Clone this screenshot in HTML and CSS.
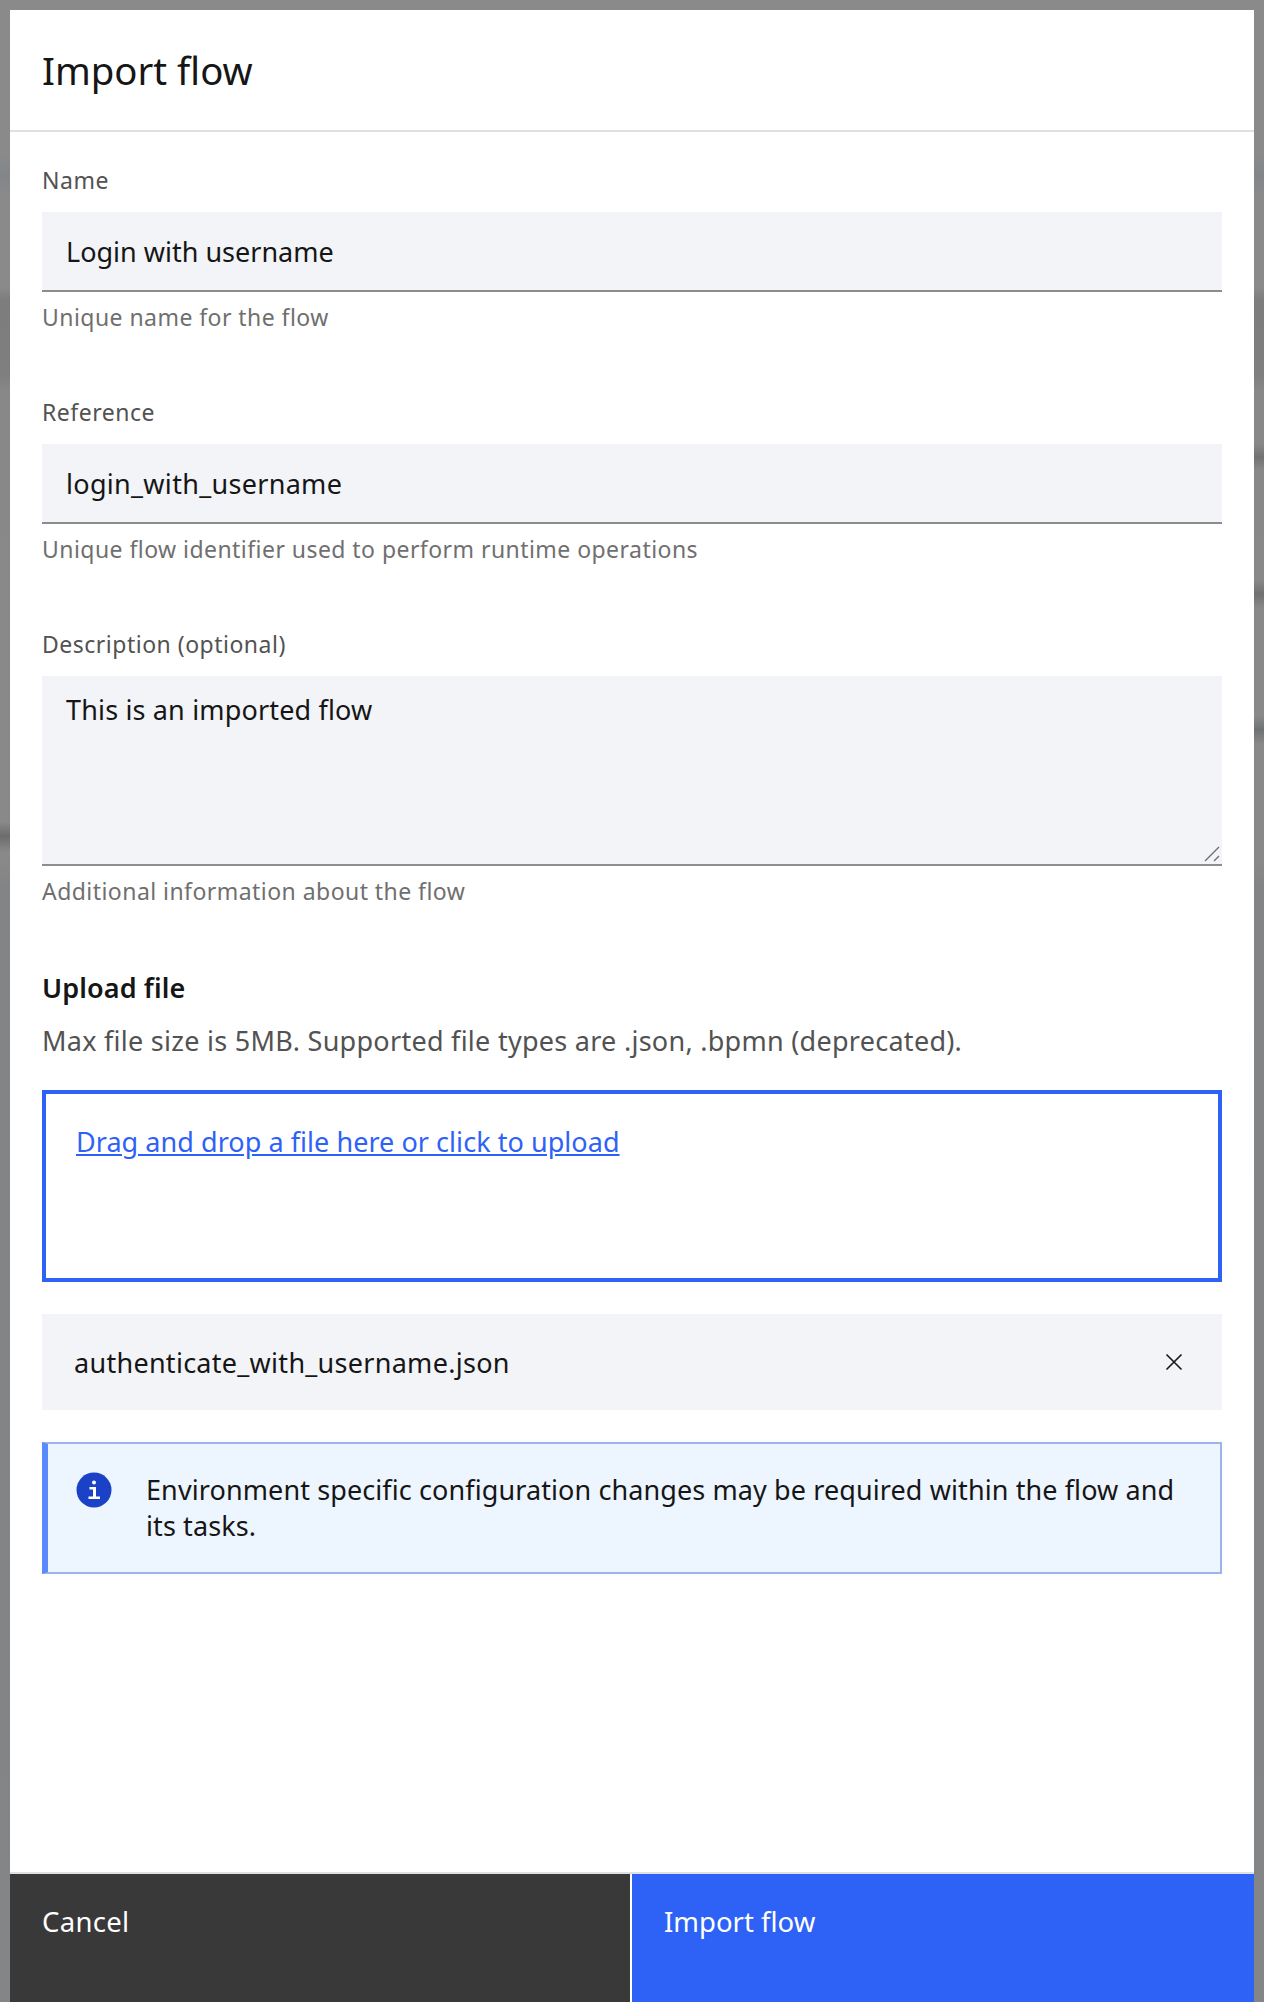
FILE: index.html
```html
<!DOCTYPE html>
<html lang="en">
<head>
    <meta charset="UTF-8">
    <meta name="viewport" content="width=device-width, initial-scale=1.0">
    <title>Import flow</title>
    <link rel="stylesheet" href="styles.css">
</head>
<body>
    <div class="modal">
        <header class="modal-header">
            <h2>Import flow</h2>
        </header>

        <div class="modal-body">
            <div class="field">
                <label class="field-label">Name</label>
                <div class="text-input">Login with username</div>
                <div class="helper">Unique name for the flow</div>
            </div>

            <div class="field">
                <label class="field-label">Reference</label>
                <div class="text-input text-input-ref">login_with_username</div>
                <div class="helper">Unique flow identifier used to perform runtime operations</div>
            </div>

            <div class="field">
                <label class="field-label">Description (optional)</label>
                <div class="text-input text-area">
                    This is an imported flow
                    <svg class="resize-grip" width="16" height="16" viewBox="0 0 16 16">
                        <path d="M1 15 15 1M10 15 15 10" stroke="#6f6f6f" stroke-width="1.4" fill="none"/>
                    </svg>
                </div>
                <div class="helper">Additional information about the flow</div>
            </div>

            <h3 class="upload-title">Upload file</h3>
            <p class="upload-note">Max file size is 5MB. Supported file types are .json, .bpmn (deprecated).</p>

            <div class="dropzone">
                <a href="#">Drag and drop a file here or click to upload</a>
            </div>

            <div class="file-row">
                <span>authenticate_with_username.json</span>
                <svg class="file-close" width="22" height="22" viewBox="0 0 22 22">
                    <path d="M3.5 3.5 18.5 18.5M18.5 3.500 3.500 18.5" stroke="#161616" stroke-width="1.6" fill="none"/>
                </svg>
            </div>

            <div class="notice">
                <svg class="notice-icon" width="36" height="36" viewBox="0 0 36 36">
                    <circle cx="18" cy="18" r="17.5" fill="#1a41c6"/>
                    <circle cx="18" cy="10.5" r="2" fill="#fff"/>
                    <path d="M13.5 15h6.5v9.500h4v2.500H12.500v-2.500h4.500v-7h-3.500z" fill="#fff"/>
                </svg>
                <p>Environment specific configuration changes may be required within the flow and its tasks.</p>
            </div>
        </div>

        <footer class="modal-footer">
            <button class="btn btn-cancel">Cancel</button>
            <button class="btn btn-primary">Import flow</button>
        </footer>
    </div>
</body>
</html>
```

FILE: styles.css
```css
html, body {
    height: 100%;
}

body {
    margin: 0;
    padding: 10px 10px 0;
    box-sizing: border-box;
    overflow: hidden;
    /* blurred page behind the scrim: a few dark bands on each side */
    background:
        linear-gradient(to bottom, transparent 822px, #6c6c6c 836px, transparent 852px) 0 0 / 10px 100% no-repeat,
        linear-gradient(to bottom, transparent 444px, #727272 457px, transparent 470px, transparent 580px, #707070 594px, transparent 608px, transparent 716px, #6f7273 730px, transparent 744px) 100% 0 / 10px 100% no-repeat,
        linear-gradient(to bottom, #8a8a8a 0, #8a8a8a 155px, #82858a 175px, #8a8a8a 195px, #8a8a8a 288px, #7d7d7d 300px, #7f7f7f 375px, #888 392px, #898989 860px, #838486 885px, #848587 100%);
    color: #161616;
    font-family: "Noto Sans", "Liberation Sans", sans-serif;
}

.modal {
    height: 100%;
    display: flex;
    flex-direction: column;
    background: #fff;
}

.modal-header {
    height: 122px;
    box-sizing: border-box;
    padding: 0 32px;
    display: flex;
    align-items: center;
    border-bottom: 2px solid #e0e0e0;
    flex: none;
}

.modal-header h2 {
    margin: 0;
    font-size: 38.3px;
    font-weight: 400;
}

.modal-body {
    flex: 1;
    padding: 32px 32px 0;
}

.field {
    margin-bottom: 54px;
}

.field-label {
    display: block;
    margin-bottom: 16px;
    line-height: 32px;
    font-size: 23px;
    letter-spacing: 0.5px;
    color: #525252;
}

.text-input {
    position: relative;
    height: 80px;
    box-sizing: border-box;
    padding: 0 24px;
    display: flex;
    align-items: center;
    background: #f2f4f8;
    border-bottom: 2px solid #8d8d8d;
    font-size: 27px;
}

.text-input-ref {
    letter-spacing: 0.3px;
}

.text-area {
    height: 190px;
    align-items: flex-start;
    padding-top: 15px;
    letter-spacing: 0.16px;
}

.resize-grip {
    position: absolute;
    right: 2px;
    bottom: 2px;
}

.helper {
    height: 50px;
    line-height: 50px;
    font-size: 23px;
    letter-spacing: 0.45px;
    color: #6f6f6f;
}

.upload-title {
    margin: 0;
    line-height: 36px;
    font-size: 27px;
    font-weight: 600;
    letter-spacing: 0.1px;
}

.upload-note {
    margin: 17px 0 0;
    line-height: 36px;
    font-size: 27px;
    letter-spacing: 0.27px;
    color: #525252;
}

.dropzone {
    height: 192px;
    box-sizing: border-box;
    margin-top: 31px;
    padding: 30px;
    border: 4px solid #2e62f6;
    font-size: 27px;
    letter-spacing: 0.05px;
    line-height: 36px;
}

.dropzone a {
    color: #2e62f6;
}

.file-row {
    height: 96px;
    box-sizing: border-box;
    margin-top: 32px;
    padding: 0 37px 0 32px;
    display: flex;
    align-items: center;
    justify-content: space-between;
    background: #f2f4f8;
    font-size: 27px;
    letter-spacing: 0.28px;
}

.notice {
    height: 132px;
    box-sizing: border-box;
    margin-top: 32px;
    padding: 25px 40px 0 28px;
    display: flex;
    gap: 34px;
    background: #edf5ff;
    border: 2px solid #9db3ec;
    border-left: 6px solid #5b8afc;
    font-size: 27px;
    letter-spacing: 0.1px;
    line-height: 36px;
}

.notice-icon {
    flex: none;
    margin-top: 3px;
}

.notice p {
    margin: 3px 0 0;
}

.modal-footer {
    flex: none;
    height: 130px;
    display: grid;
    grid-template-columns: 620px 1fr;
    gap: 2px;
    border-top: 2px solid #e0e0e0;
    box-sizing: border-box;
}

.btn {
    border: none;
    padding: 30px 32px 0;
    display: flex;
    align-items: flex-start;
    font: inherit;
    font-size: 27.5px;
    line-height: 36px;
    color: #fff;
}

.btn-cancel {
    background: #393939;
    letter-spacing: 0.3px;
}

.btn-primary {
    background: #2e62f6;
}
```
